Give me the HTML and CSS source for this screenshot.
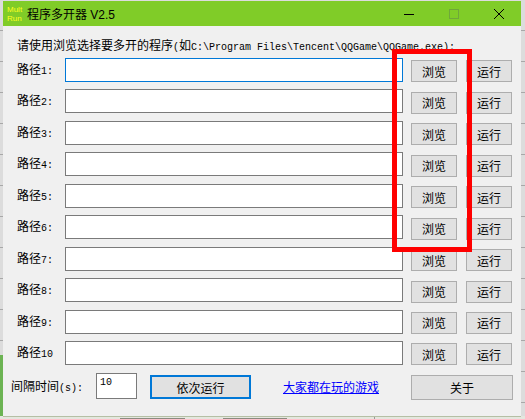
FILE: index.html
```html
<!DOCTYPE html>
<html lang="zh-CN">
  <head>
    <meta charset="UTF-8" />
    <title>程序多开器 V2.5</title>
    <link rel="stylesheet" href="styles.css">
  </head>
  <body>
    <div class="window">
      <div class="titlebar">
        <div class="logo"><span>Mult</span><span>Run</span></div>
        <div class="title">程序多开器 V2.5</div>
        <div class="win-btns">
          <svg width="10" height="10" viewBox="0 0 10 10"><path d="M0 5.5H10" stroke="#000" fill="none"/></svg>
          <svg width="10" height="10" viewBox="0 0 10 10"><rect x="0.5" y="0.5" width="9" height="9" stroke="#6fa83a" fill="none"/></svg>
          <svg width="10" height="10" viewBox="0 0 10 10"><path d="M0 0L10 10M10 0L0 10" stroke="#000" fill="none"/></svg>
        </div>
      </div>
      <div class="content">
        <div class="hint">请使用浏览选择要多开的程序<span class="lat">(</span>如<span class="lat">C:\Program Files\Tencent\QQGame\QQGame.exe):</span></div>
        <div class="rows">
          <label class="name">路径<span class="lat">1:</span></label>
          <input class="path focused" type="text" />
          <button class="btn">浏览</button>
          <button class="btn">运行</button>

          <label class="name">路径<span class="lat">2:</span></label>
          <input class="path" type="text" />
          <button class="btn">浏览</button>
          <button class="btn">运行</button>

          <label class="name">路径<span class="lat">3:</span></label>
          <input class="path" type="text" />
          <button class="btn">浏览</button>
          <button class="btn">运行</button>

          <label class="name">路径<span class="lat">4:</span></label>
          <input class="path" type="text" />
          <button class="btn">浏览</button>
          <button class="btn">运行</button>

          <label class="name">路径<span class="lat">5:</span></label>
          <input class="path" type="text" />
          <button class="btn">浏览</button>
          <button class="btn">运行</button>

          <label class="name">路径<span class="lat">6:</span></label>
          <input class="path" type="text" />
          <button class="btn">浏览</button>
          <button class="btn">运行</button>

          <label class="name">路径<span class="lat">7:</span></label>
          <input class="path" type="text" />
          <button class="btn">浏览</button>
          <button class="btn">运行</button>

          <label class="name">路径<span class="lat">8:</span></label>
          <input class="path" type="text" />
          <button class="btn">浏览</button>
          <button class="btn">运行</button>

          <label class="name">路径<span class="lat">9:</span></label>
          <input class="path" type="text" />
          <button class="btn">浏览</button>
          <button class="btn">运行</button>

          <label class="name">路径<span class="lat">10</span></label>
          <input class="path" type="text" />
          <button class="btn">浏览</button>
          <button class="btn">运行</button>
        </div>
        <div class="bottom">
          <label class="interval">间隔时间<span class="lat">(s):</span></label>
          <input class="secs" type="text" value="10" />
          <button class="btn run-all">依次运行</button>
          <a class="games" href="#">大家都在玩的游戏</a>
          <button class="btn about">关于</button>
        </div>
      </div>
      <!-- 红框标注 -->
      <div class="mark"></div>
    </div>
  </body>
</html>
```

FILE: styles.css
```css
* {
  box-sizing: border-box;
}
html,
body {
  height: 100%;
}
body {
  margin: 0;
  padding: 1px 4px 3px 3px;
  overflow: hidden;
  font-family: "Noto Sans CJK SC", "Liberation Sans", sans-serif;
  font-size: 12px;
  color: #000;
  background:
    linear-gradient(#8a8a80, #8a8a80) 120px 100% / 65px 1px no-repeat,
    linear-gradient(#8a8a80, #8a8a80) 223px 100% / 64px 1px no-repeat,
    linear-gradient(#9a9a9a, #9a9a9a) 374px 100% / 1px 3px no-repeat,
    linear-gradient(#e4e6de, #e4e6de) 0 100% / 100% 3px no-repeat,
    linear-gradient(#6cb353, #6cb353) 0 100% / 3px 64px no-repeat,
    repeating-linear-gradient(#dcdcdc 0 30px, #a8a8a8 30px 31px);
}
.window {
  position: relative;
  width: 518px;
  height: 415px;
  background: #f0f0f0;
  box-shadow: 0 1px 0 #b5bfa4;
}
.titlebar {
  display: flex;
  align-items: center;
  height: 25px;
  background: #80cc28;
}
.logo {
  display: flex;
  flex-direction: column;
  width: 24px;
  padding: 1px 0 0 4px;
  font-family: "Liberation Sans", sans-serif;
  font-size: 8px;
  line-height: 9px;
  color: #ffff20;
}
.title {
  flex: 1;
  font-family: "Liberation Sans", "Noto Sans CJK SC", sans-serif;
}
.win-btns {
  display: flex;
  gap: 35px;
  margin-right: 17px;
}
.lat {
  font-family: "Liberation Mono", monospace;
  font-size: 10px;
}
.hint {
  height: 32px;
  padding: 11px 0 0 14px;
  line-height: 16px;
  white-space: nowrap;
}
.rows {
  display: grid;
  grid-template-columns: 48px 346px 55px 46px;
  grid-auto-rows: 31.44px;
  padding-left: 14px;
}
.name {
  line-height: 21px;
  white-space: nowrap;
}
.path {
  width: 338px;
  height: 24px;
  border: 1px solid #7a7a7a;
  background: #fff;
  outline: none;
}
.path.focused {
  border-color: #0078d7;
}
.btn {
  width: 46px;
  height: 22px;
  padding: 0;
  margin-top: 2.45px;
  border: 1px solid #adadad;
  background: #e1e1e1;
  font: inherit;
  color: #000;
}
.bottom {
  display: flex;
  align-items: flex-start;
  padding: 1px 8px 0 8px;
}
.interval {
  width: 85px;
  margin-top: 5px;
  line-height: 16px;
  white-space: nowrap;
}
.secs {
  width: 41px;
  height: 26px;
  padding: 0 0 8px 3px;
  border: 1px solid #7a7a7a;
  background: #fff;
  font-family: "Liberation Mono", monospace;
  font-size: 10px;
  outline: none;
}
.run-all {
  width: 101px;
  height: 24px;
  margin: 2px 0 0 13px;
  border: 2px solid #0078d7;
}
.games {
  margin: 6px 0 0 32px;
  line-height: 16px;
  color: #0000ff;
}
.about {
  width: 102px;
  height: 25px;
  margin: 2px 0 0 auto;
}
.mark {
  position: absolute;
  left: 389px;
  top: 48px;
  width: 80px;
  height: 203px;
  border: 5px solid #ff0000;
}
```
